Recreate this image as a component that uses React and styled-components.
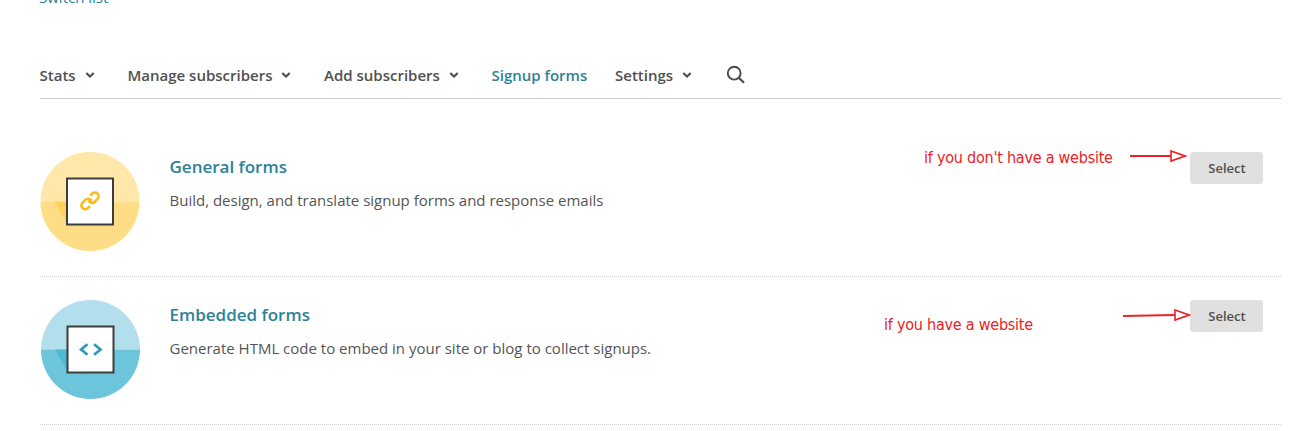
import React from "react";
import styled, { createGlobalStyle } from "styled-components";

const navItems = [
  { label: "Stats", menu: true, width: 88 },
  { label: "Manage subscribers", menu: true, width: 196.5 },
  { label: "Add subscribers", menu: true, width: 167.5 },
  { label: "Signup forms", active: true, width: 123.5 },
  { label: "Settings", menu: true, width: 110 },
];

const forms = [
  {
    title: "General forms",
    text: "Build, design, and translate signup forms and response emails",
    icon: "link",
    colors: { top: "#ffe7aa", bottom: "#ffdd87", shadow: "#ffd158", mark: "#fdbc13" },
    note: { text: "if you don't have a website", left: 884, top: -5 },
    arrow: { left: 1090, top: -3, tilt: 0, width: 57 },
  },
  {
    title: "Embedded forms",
    text: "Generate HTML code to embed in your site or blog to collect signups.",
    icon: "code",
    colors: { top: "#b2dfeb", bottom: "#6dc5db", shadow: "#4fb8d3", mark: "#2d9ab7" },
    note: { text: "if you have a website", left: 844, top: 14 },
    arrow: { left: 1083, top: 8, tilt: 1, width: 68 },
  },
];

function Chevron() {
  return (
    <ChevronSvg width="10" height="8" viewBox="0 0 10 8">
      <path d="M1.3 2.1 5 5.6 8.7 2.1" fill="none" stroke="#4a4a4a" strokeWidth="2" />
    </ChevronSvg>
  );
}

function FormIcon({ type, colors }) {
  return (
    <IconSvg width="100" height="99" viewBox={type === "code" ? "-.5 0 100 99" : "0 0 100 99"}>
      <path d="M.5 49.5a49.5 49.5 0 0 1 99 0z" fill={colors.top} />
      <path d="M.5 49.5a49.5 49.5 0 0 0 99 0z" fill={colors.bottom} />
      <path d="M14.5 49.5H27v22z" fill={colors.shadow} />
      <rect x="27" y="26.5" width="46" height="46" fill="#fff" stroke="#3c3c3c" strokeWidth="2" />
      {type === "link" ? (
        <g
          transform="translate(40.2 39) scale(.82)"
          fill="none"
          stroke={colors.mark}
          strokeWidth="3.1"
          strokeLinecap="round"
        >
          <path d="M10.8 12.6a4.6 4.6 0 0 0 7 .5l3.4-3.4a4.6 4.6 0 0 0-6.6-6.6l-1.5 1.5" />
          <path d="M13.2 11.4a4.6 4.6 0 0 0-7-.5l-3.4 3.4a4.6 4.6 0 0 0 6.6 6.6l1.5-1.5" />
        </g>
      ) : (
        <path
          d="m47 44.2-6.4 5.3 6.4 5.3M53.6 44.2l6.4 5.3-6.4 5.3"
          fill="none"
          stroke={colors.mark}
          strokeWidth="2.7"
        />
      )}
    </IconSvg>
  );
}

function Arrow({ left, top, tilt, width }) {
  const head = width - 16;
  return (
    <ArrowSvg $left={left} $top={top} width={width} height="15" viewBox={`0 0 ${width} 15`}>
      <path d={`M0 ${7 + tilt}L${head} 7`} fill="none" stroke="#ed2024" strokeWidth="2" />
      <path
        d={`M${head} 2 ${width - 2} 7 ${head} 12z`}
        fill="#fff"
        stroke="#ed2024"
        strokeWidth="1.6"
      />
    </ArrowSvg>
  );
}

function App() {
  return (
    <Page>
      <GlobalStyle />
      <SwitchLink>Switch list</SwitchLink>
      <Nav>
        {navItems.map((item) => (
          <NavItem key={item.label} $active={item.active} $width={item.width}>
            {item.label}
            {item.menu && <Chevron />}
          </NavItem>
        ))}
        <svg width="20" height="20" viewBox="0 0 20 20" fill="none" stroke="#4a4a4a">
          <circle cx="8.2" cy="8.2" r="6.4" strokeWidth="1.9" />
          <path d="m12.8 12.8 5.2 5" strokeWidth="2.2" />
        </svg>
      </Nav>
      {forms.map((form) => (
        <FormRow key={form.title}>
          <FormIcon type={form.icon} colors={form.colors} />
          <FormInfo>
            <FormTitle>{form.title}</FormTitle>
            <FormText>{form.text}</FormText>
          </FormInfo>
          <SelectButton>Select</SelectButton>
          <Note $left={form.note.left} $top={form.note.top}>
            {form.note.text}
          </Note>
          <Arrow {...form.arrow} />
        </FormRow>
      ))}
    </Page>
  );
}

const GlobalStyle = createGlobalStyle`
  * {
    box-sizing: border-box;
  }
  body {
    margin: 0;
    background: #fff;
    color: #4a4a4a;
    font-family: "Open Sans", sans-serif;
    font-size: 15px;
    overflow: hidden;
  }
`;

const Page = styled.div`
  width: 1281px;
  height: 431px;
  padding-left: 40px;
  overflow: hidden;
`;

const SwitchLink = styled.div`
  height: 20px;
  margin-top: -13px;
  margin-left: -1px;
  line-height: 20px;
  font-size: 15px;
  color: #2c8297;
`;

const Nav = styled.div`
  display: flex;
  align-items: center;
  height: 48px;
  margin-top: 44px;
  margin-bottom: 53px;
  border-bottom: 1px solid #c9c9c9;
`;

const NavItem = styled.div`
  display: flex;
  align-items: center;
  flex: none;
  width: ${(props) => props.$width}px;
  margin-left: -0.5px;
  margin-right: 0.5px;
  font-weight: 600;
  color: ${(props) => (props.$active ? "#2c8297" : "#505050")};
`;

const ChevronSvg = styled.svg`
  margin-left: 9px;
`;

const FormRow = styled.div`
  position: relative;
  display: flex;
  align-items: flex-start;
  height: 125px;
  margin-bottom: 23px;
  padding-right: 18px;
  border-bottom: 1px dotted #d0d0d0;
`;

const IconSvg = styled.svg`
  flex: none;
`;

const FormInfo = styled.div`
  flex: 1;
  margin-left: 29.5px;
`;

const FormTitle = styled.div`
  margin-top: 2px;
  line-height: 26px;
  font-size: 17px;
  font-weight: 600;
  color: #2c8297;
`;

const FormText = styled.div`
  margin-top: 8px;
  line-height: 24px;
  color: #555;
`;

const SelectButton = styled.button`
  width: 73px;
  height: 32px;
  padding: 0 0 0 1px;
  border: 0;
  border-radius: 3px;
  background: #e0e0e0;
  color: #505050;
  font-family: inherit;
  font-size: 13px;
  font-weight: 600;
`;

const Note = styled.div`
  position: absolute;
  left: ${(props) => props.$left}px;
  top: ${(props) => props.$top}px;
  line-height: 22px;
  font-family: "DejaVu Sans Condensed", "DejaVu Sans", sans-serif;
  font-stretch: condensed;
  font-size: 16px;
  letter-spacing: -0.23px;
  white-space: nowrap;
  color: #ed2024;
`;

const ArrowSvg = styled.svg`
  position: absolute;
  left: ${(props) => props.$left}px;
  top: ${(props) => props.$top}px;
`;

export default App;
